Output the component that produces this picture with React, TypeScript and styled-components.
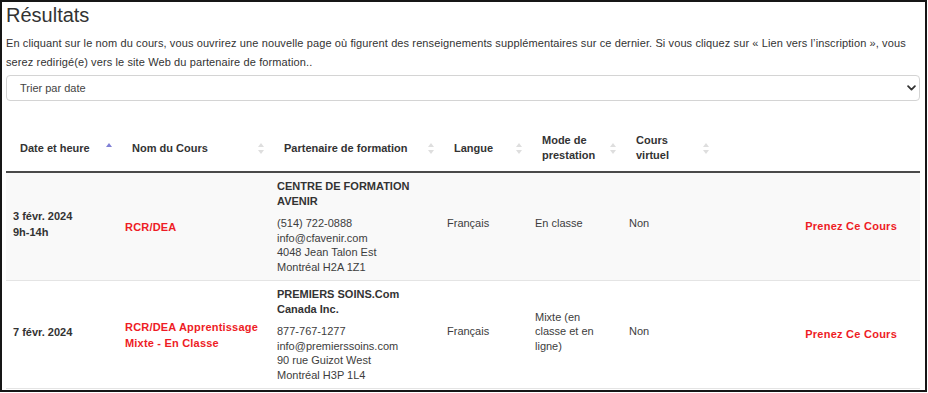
import React from "react";
import styled, { createGlobalStyle } from "styled-components";

const GlobalStyle = createGlobalStyle`
  html, body {
    margin: 0;
    padding: 0;
    background: #ffffff;
  }
  body {
    font-family: "Liberation Sans", Arial, sans-serif;
    color: #333333;
  }
`;

const Frame = styled.div`
  width: 927px;
  height: 392px;
  box-sizing: border-box;
  border: 2px solid #161616;
  padding: 1px 5px 0 4px;
  overflow: hidden;
  background: #ffffff;
`;

const Title = styled.h2`
  margin: 0;
  font-size: 20px;
  line-height: 24px;
  font-weight: 400;
  color: #333333;
`;

const Intro = styled.p`
  margin: 7px 0 0;
  font-size: 11px;
  line-height: 18.5px;
  letter-spacing: 0.11px;
  color: #333333;
`;

const SelectBox = styled.div`
  margin-top: 4px;
  height: 26px;
  box-sizing: border-box;
  border: 1px solid #d4d4d4;
  border-radius: 4px;
  display: flex;
  align-items: center;
  justify-content: space-between;
  padding: 0 3px 0 13px;
  font-size: 11px;
  color: #444444;
`;

const Table = styled.table`
  margin-top: 24px;
  width: 100%;
  border-collapse: collapse;
  table-layout: fixed;
  font-size: 11px;
`;

const HeadCell = styled.th`
  padding: 8px 6px 8px 14px;
  text-align: left;
  vertical-align: middle;
  font-weight: 700;
  line-height: 15px;
  color: #333333;
  border-bottom: 2px solid #4a4a4a;
`;

const HeadInner = styled.div`
  display: flex;
  align-items: center;
  gap: 4px;
`;

const HeadLabel = styled.span`
  flex: 1;
`;

const Row = styled.tr<{ $striped?: boolean }>`
  background: ${(p) => (p.$striped ? "#f9f9f9" : "#ffffff")};
`;

const Cell = styled.td<{ $lift?: boolean; $align?: "left" | "right" }>`
  padding: ${(p) => (p.$lift ? "6px 22px 12px 7px" : "6px 7px")};
  text-align: ${(p) => p.$align ?? "left"};
  vertical-align: middle;
  line-height: 14.5px;
  color: #3d3d3d;
  border-bottom: 1px solid #e4e4e4;
`;

const ActionCell = styled(Cell)`
  padding-right: 23px;
`;

const DateText = styled.div`
  font-weight: 700;
  line-height: 16px;
  color: #333333;
`;

const CourseLink = styled.a`
  display: block;
  font-weight: 700;
  line-height: 16px;
  letter-spacing: 0.2px;
  color: #ee1c25;
  text-decoration: none;
`;

const PartnerName = styled.div`
  font-weight: 700;
  color: #333333;
  margin-bottom: 8px;
`;

const TakeLink = styled.a`
  font-weight: 700;
  letter-spacing: 0.25px;
  color: #ee1c25;
  text-decoration: none;
`;

const SortIcon = ({ active }: { active?: boolean }) => (
  <svg width="6" height="11" viewBox="0 0 6 11" style={{ flex: "none" }}>
    <polygon points="0,4 3,0 6,4" fill={active ? "#7f7fd5" : "#dedede"} />
    {!active && <polygon points="0,7 3,11 6,7" fill="#dedede" />}
  </svg>
);

const Chevron = () => (
  <svg width="9" height="6" viewBox="0 0 9 6">
    <polyline
      points="1.1,1.2 4.5,4.6 7.9,1.2"
      fill="none"
      stroke="#333"
      strokeWidth="1.8"
      strokeLinecap="round"
      strokeLinejoin="round"
    />
  </svg>
);

type Course = {
  date: string;
  time?: string;
  name: string[];
  partner: string[];
  contact: string[];
  lang: string;
  mode: string;
  virtual: string;
};

const courses: Course[] = [
  {
    date: "3 févr. 2024",
    time: "9h-14h",
    name: ["RCR/DEA"],
    partner: ["CENTRE DE FORMATION", "AVENIR"],
    contact: ["(514) 722-0888", "info@cfavenir.com", "4048 Jean Talon Est", "Montréal H2A 1Z1"],
    lang: "Français",
    mode: "En classe",
    virtual: "Non",
  },
  {
    date: "7 févr. 2024",
    name: ["RCR/DEA Apprentissage", "Mixte - En Classe"],
    partner: ["PREMIERS SOINS.Com", "Canada Inc."],
    contact: ["877-767-1277", "info@premierssoins.com", "90 rue Guizot West", "Montréal H3P 1L4"],
    lang: "Français",
    mode: "Mixte (en classe et en ligne)",
    virtual: "Non",
  },
];

const columns = [
  { label: "Date et heure", width: 112, active: true },
  { label: "Nom du Cours", width: 152 },
  { label: "Partenaire de formation", width: 170 },
  { label: "Langue", width: 88 },
  { label: "Mode de prestation", width: 94 },
  { label: "Cours virtuel", width: 93 },
];

const lines = (items: string[]) =>
  items.map((t, i) => (
    <React.Fragment key={i}>
      {i > 0 && <br />}
      {t}
    </React.Fragment>
  ));

export default function App() {
  return (
    <>
      <GlobalStyle />
      <Frame>
        <Title>Résultats</Title>
        <Intro>
          En cliquant sur le nom du cours, vous ouvrirez une nouvelle page où figurent des
          renseignements supplémentaires sur ce dernier. Si vous cliquez sur « Lien vers
          l’inscription », vous serez redirigé(e) vers le site Web du partenaire de formation..
        </Intro>
        <SelectBox>
          <span>Trier par date</span>
          <Chevron />
        </SelectBox>
        <Table>
          <colgroup>
            {columns.map((c) => (
              <col key={c.label} style={{ width: c.width }} />
            ))}
            <col />
          </colgroup>
          <thead>
            <tr>
              {columns.map((c) => (
                <HeadCell key={c.label}>
                  <HeadInner>
                    <HeadLabel>{c.label}</HeadLabel>
                    <SortIcon active={c.active} />
                  </HeadInner>
                </HeadCell>
              ))}
              <HeadCell />
            </tr>
          </thead>
          <tbody>
            {courses.map((c, i) => (
              <Row key={c.date} $striped={i % 2 === 0}>
                <Cell $lift>
                  <DateText>{lines(c.time ? [c.date, c.time] : [c.date])}</DateText>
                </Cell>
                <Cell>
                  <CourseLink href="#">{lines(c.name)}</CourseLink>
                </Cell>
                <Cell>
                  <PartnerName>{lines(c.partner)}</PartnerName>
                  <div>{lines(c.contact)}</div>
                </Cell>
                <Cell $lift>{c.lang}</Cell>
                <Cell $lift>{c.mode}</Cell>
                <Cell $lift>{c.virtual}</Cell>
                <ActionCell $align="right">
                  <TakeLink href="#">Prenez Ce Cours</TakeLink>
                </ActionCell>
              </Row>
            ))}
          </tbody>
        </Table>
      </Frame>
    </>
  );
}
